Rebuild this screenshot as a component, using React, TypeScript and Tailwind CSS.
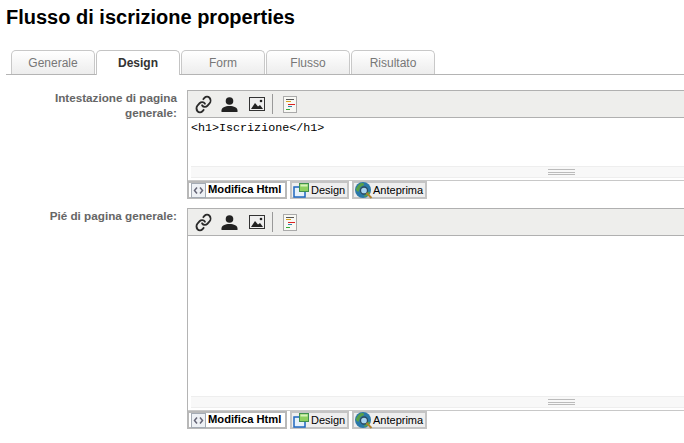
const tabs = ["Generale", "Design", "Form", "Flusso", "Risultato"];

const LinkIcon = () => (
  <svg width="17" height="19" viewBox="0 0 24 24" preserveAspectRatio="none" fill="none" stroke="#2a2a2a" strokeWidth="2.500" strokeLinecap="round">
    <path d="M10 13a5 5 0 0 0 7.540.540l3-3a5 5 0 0 0-7.070-7.070l-1.720 1.710" />
    <path d="M14 11a5 5 0 0 0-7.540-.540l-3 3a5 5 0 0 0 7.070 7.070l1.710-1.710" />
  </svg>
);

const PersonIcon = () => (
  <svg width="17" height="15" viewBox="0 0 17 15" fill="#222">
    <circle cx="8.500" cy="4" r="3.800" />
    <path d="M0.500 15v-1.500c0-3 3.500-4.500 8-4.500s8 1.500 8 4.500v1.500z" />
  </svg>
);

const ImageIcon = () => (
  <svg width="16" height="14" viewBox="0 0 16 14">
    <rect x="0.500" y="0.500" width="15" height="13" fill="#eee" stroke="#333" />
    <path d="M2 12l4-6 3 3.500 2-1.500 3 4z" fill="#222" />
    <circle cx="12" cy="4" r="1.300" fill="#222" />
  </svg>
);

const SourceIcon = () => (
  <svg width="14" height="17" viewBox="0 0 14 17">
    <rect x="0.500" y="0.500" width="13" height="16" fill="#f8f8f4" stroke="#aaa" />
    <path d="M3 3.500h8" stroke="#555" />
    <path d="M3 5.500h5" stroke="#d9a520" />
    <path d="M5 8.500h7" stroke="#d22" />
    <path d="M5 10.500h4" stroke="#38a" />
    <path d="M3 13.500h4" stroke="#3a3" />
  </svg>
);

const HtmlIcon = () => (
  <svg width="15" height="15" viewBox="0 0 15 15" fill="none">
    <rect x="0.500" y="0.500" width="14" height="14" fill="#eef1f5" stroke="#a4abb4" />
    <path d="M6 4.500 3.500 7.500 6 10.500M9 4.500l2.500 3-2.500 3" stroke="#667" strokeWidth="1.500" />
  </svg>
);

const DesignIcon = () => (
  <svg width="16" height="15" viewBox="0 0 16 15">
    <rect x="1" y="4" width="11" height="10" fill="#e6f1fb" stroke="#1c66c0" strokeWidth="1.500" />
    <rect x="6.500" y="0.500" width="9" height="8" fill="#8ed060" stroke="#3f8f50" />
    <rect x="7.500" y="1.500" width="7" height="2" fill="#d6f2bc" />
  </svg>
);

const PreviewIcon = () => (
  <svg width="18" height="17" viewBox="0 0 18 17">
    <circle cx="8" cy="8" r="8" fill="#2a78a8" />
    <path d="M2 5c2-4 6-5 7-3s-3 1.500-4 4-1 5-3 3-1-2 0-4zM11 11c2-1 4-2 4 0s-5 5-6 3z" fill="#58a048" />
    <circle cx="9" cy="8.500" r="3.500" fill="#a8d4f0" stroke="#2a4a60" strokeWidth="1.300" />
    <path d="M11.500 11l5 5" stroke="#b08030" strokeWidth="2" />
  </svg>
);

const ModeButtons = () => (
  <div className="flex gap-[3px] h-[18px] text-[11px] leading-none text-black">
    <div className="flex items-center gap-[2px] w-[100px] border-2 border-[#b8b8b8] bg-white pl-[2px] font-bold text-[11.200px]">
      <HtmlIcon />
      <span>Modifica Html</span>
    </div>
    <div className="flex items-center gap-[2px] w-[59px] border-2 border-[#c4c4c4] bg-[#eeeeee] pl-[1px]">
      <DesignIcon />
      <span>Design</span>
    </div>
    <div className="flex items-center w-[75px] border-2 border-[#c4c4c4] bg-[#eeeeee] pl-[1px]">
      <PreviewIcon />
      <span>Anteprima</span>
    </div>
  </div>
);

const Editor = ({ height, content }: { height: string; content?: string }) => (
  <div>
    <div className="border-l border-[#b4b4b4]">
      <div className="flex items-center h-[28px] bg-[#eeeeec] border-y border-[#b0b0b0] pl-[7px]">
        <LinkIcon />
        <span className="ml-[9px] flex"><PersonIcon /></span>
        <span className="ml-[11px] flex"><ImageIcon /></span>
        <span className="ml-[7px] w-px h-[20px] bg-[#999]" />
        <span className="ml-[10px] flex"><SourceIcon /></span>
      </div>
      <div className={`${height} flex flex-col`}>
        <pre className="grow pl-[3px] pt-[4px] text-[11.700px] leading-[13px] text-black font-['Liberation_Mono',monospace]">
          {content}
        </pre>
        <div className="flex justify-center items-center h-[12px] ml-[3px] bg-[#f8f8f8] border-y border-[#eeeeee]">
          <div className="w-[27px] h-[6px] border-y border-[#bbb] flex items-center">
            <div className="w-full h-px bg-[#bbb]" />
          </div>
        </div>
        <div className="h-[2px]" />
      </div>
      <div className="h-px bg-[#c8c8c8]" />
    </div>
    <ModeButtons />
  </div>
);

export default function App() {
  return (
    <div className="w-[684px] h-[443px] overflow-hidden bg-white font-['Liberation_Sans',Arial,sans-serif]">
      <h1 className="pt-[6px] pl-[6px] h-[50px] text-[20px] leading-[22px] font-bold text-black">
        Flusso di iscrizione properties
      </h1>
      <div className="flex gap-px ml-[6px] pl-[5px] h-[25px] border-b border-[#b4b4b4]">
        {tabs.map((tab) =>
          tab === "Design" ? (
            <div
              key={tab}
              className="w-[84px] h-[25px] flex items-center justify-center rounded-t-[5px] border border-b-0 border-[#c4c4c4] bg-white text-[12px] font-bold text-[#333]"
            >
              {tab}
            </div>
          ) : (
            <div
              key={tab}
              className="w-[84px] h-[24px] flex items-center justify-center rounded-t-[5px] border border-b-0 border-[#c8c8c8] bg-gradient-to-b from-white to-[#ededed] text-[12px] text-[#777]"
            >
              {tab}
            </div>
          )
        )}
      </div>
      <div className="grid grid-cols-[187px_745px] pt-[15px] gap-y-[9px]">
        <div className="pr-[10px] text-right text-[11.700px] leading-[15px] font-bold text-[#666]">
          Intestazione di pagina generale:
        </div>
        <Editor height="h-[62px]" content="<h1>Iscrizione</h1>" />
        <div className="pr-[10px] text-right text-[11.700px] leading-[15px] font-bold text-[#666]">
          Pié di pagina generale:
        </div>
        <Editor height="h-[174px]" />
      </div>
    </div>
  );
}
